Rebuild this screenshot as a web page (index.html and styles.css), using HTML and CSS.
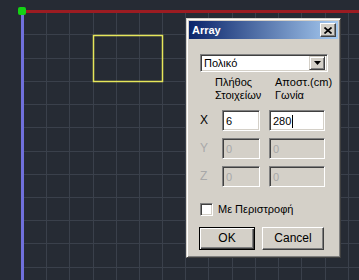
FILE: index.html
```html
<!DOCTYPE html>
<html>

<head>
    <meta charset="utf-8" />
    <title>Array</title>
    <link rel="stylesheet" href="styles.css">
</head>

<body>
    <!-- drawing area: grid, axes, origin, rectangle -->
    <svg class="canvas" width="359" height="280" viewBox="0 0 359 280">
        <path class="grid" d="M46.5 12V280M69.5 12V280M93.5 12V280M116.5 12V280M139.5 12V280M162.5 12V280M185.5 12V280M208.5 12V280M232.5 12V280M255.5 12V280M278.5 12V280M301.5 12V280M325.5 12V280M348.5 12V280
            M23 34.5H359M23 58.5H359M23 81.5H359M23 104.5H359M23 127.5H359M23 151.5H359M23 174.5H359M23 197.5H359M23 220.5H359M23 243.5H359M23 267.5H359" />
        <rect class="axis-x" x="22" y="10" width="337" height="3" />
        <rect class="axis-y" x="21" y="11" width="3" height="269" />
        <rect class="shape" x="93.5" y="35.5" width="69" height="46" />
        <rect class="origin" x="18" y="7" width="8" height="8" rx="2" />
    </svg>

    <div class="dialog">
        <div class="titlebar">
            <span class="title">Array</span>
            <span class="close">
                <svg width="8" height="7" viewBox="0 0 8 7"><path d="M0.5 0.5L7.5 6.5M7.5 0.5L0.5 6.5" /></svg>
            </span>
        </div>
        <div class="body">
            <div class="combo">
                <span class="combo-text">Πολικό</span>
                <span class="combo-btn">
                    <svg width="7" height="4" viewBox="0 0 7 4"><path d="M0 0H7L3.5 4Z" /></svg>
                </span>
            </div>
            <div class="heads">
                <div class="head head-count">Πλήθος<br>Στοιχείων</div>
                <div class="head head-step">Αποστ.(cm)<br>Γωνία</div>
            </div>
            <div class="fields">
                <div class="row">
                    <span class="axis">X</span>
                    <span class="field count">6</span>
                    <span class="field step">280<span class="caret"></span></span>
                </div>
                <div class="row disabled">
                    <span class="axis">Y</span>
                    <span class="field count">0</span>
                    <span class="field step">0</span>
                </div>
                <div class="row disabled">
                    <span class="axis">Z</span>
                    <span class="field count">0</span>
                    <span class="field step">0</span>
                </div>
            </div>
            <div class="check">
                <span class="box"></span>
                <span>Με Περιστροφή</span>
            </div>
            <div class="buttons">
                <span class="btn btn-default">OK</span>
                <span class="btn btn-cancel">Cancel</span>
            </div>
        </div>
    </div>
</body>

</html>
```

FILE: styles.css
```css
body {
    margin: 0;
    padding: 0;
    width: 359px;
    height: 280px;
    overflow: hidden;
    background: #262b34;
    font: 11px/13px "Liberation Sans", Arial, sans-serif;
    color: #000;
}

.canvas {
    display: block;
}

.canvas .grid {
    fill: none;
    stroke: #3a404b;
    stroke-width: 1;
}

.canvas .axis-x {
    fill: #9c1c22;
}

.canvas .axis-y {
    fill: #7070dc;
}

.canvas .shape {
    fill: none;
    stroke: #e6e65a;
    stroke-width: 1.5;
}

.canvas .origin {
    fill: #14d214;
}

/* window */
.dialog {
    position: absolute;
    left: 186px;
    top: 18px;
    width: 155px;
    height: 240px;
    box-sizing: border-box;
    padding: 2px;
    background: #d4d0c8;
    border: 1px solid;
    border-color: #d4d0c8 #404040 #404040 #d4d0c8;
    box-shadow: inset 1px 1px #fff, inset -1px -1px #808080;
}

.titlebar {
    display: flex;
    align-items: center;
    justify-content: space-between;
    height: 18px;
    padding: 0 2px 0 3px;
    background: linear-gradient(to right, #0a246a, #a6caf0);
}

.title {
    color: #fff;
    font-weight: bold;
    font-size: 11px;
}

.close {
    display: flex;
    align-items: center;
    justify-content: center;
    width: 16px;
    height: 14px;
    box-sizing: border-box;
    background: #d4d0c8;
    border: 1px solid;
    border-color: #fff #404040 #404040 #fff;
    box-shadow: inset -1px -1px #808080;
}

.close path {
    stroke: #000;
    stroke-width: 1.7;
}

.body {
    padding: 15px 0 0 11px;
}

/* sunken boxes */
.combo,
.field,
.box {
    box-sizing: border-box;
    border: 1px solid;
    border-color: #808080 #fff #fff #808080;
    box-shadow: inset 1px 1px #404040, inset -1px -1px #d4d0c8;
    background: #fff;
}

.combo {
    display: flex;
    align-items: center;
    justify-content: space-between;
    width: 128px;
    height: 18px;
    padding: 2px;
}

.combo-text {
    padding-left: 1px;
}

.combo-btn {
    display: flex;
    align-items: center;
    justify-content: center;
    width: 16px;
    height: 14px;
    box-sizing: border-box;
    background: #d4d0c8;
    border: 1px solid;
    border-color: #d4d0c8 #404040 #404040 #d4d0c8;
    box-shadow: inset 1px 1px #fff, inset -1px -1px #808080;
}

.heads {
    display: flex;
    margin-top: 4px;
    padding-left: 15px;
}

.head-count {
    width: 60px;
}

.fields {
    display: flex;
    flex-direction: column;
    gap: 7px;
    margin-top: 8px;
}

.row {
    display: flex;
    height: 21px;
}

.row .axis {
    display: flex;
    align-items: center;
    width: 22px;
    font-size: 12px;
}

.row .field {
    display: flex;
    align-items: center;
    padding: 1px 0 0 3px;
}

.row .count {
    width: 38px;
}

.row .step {
    width: 56px;
    margin-left: 9px;
}

.row.disabled {
    color: #a8a8a8;
}

.row.disabled .field {
    background: #d4d0c8;
}

.caret {
    display: inline-block;
    width: 1px;
    height: 13px;
    margin-left: 1px;
    background: #000;
}

.check {
    display: flex;
    align-items: center;
    gap: 5px;
    margin-top: 16px;
    height: 13px;
}

.check .box {
    width: 13px;
    height: 13px;
}

.buttons {
    display: flex;
    gap: 7px;
    margin: 11px 0 0 -1px;
}

.btn {
    display: flex;
    align-items: center;
    justify-content: center;
    height: 23px;
    box-sizing: border-box;
    border: 1px solid;
    border-color: #fff #404040 #404040 #fff;
    box-shadow: inset -1px -1px #808080;
    font-size: 12px;
}

.btn-default {
    width: 56px;
    border: 1px solid #000;
    box-shadow: inset 1px 1px #fff, inset -1px -1px #404040, inset -2px -2px #808080;
}

.btn-cancel {
    width: 62px;
}
```
